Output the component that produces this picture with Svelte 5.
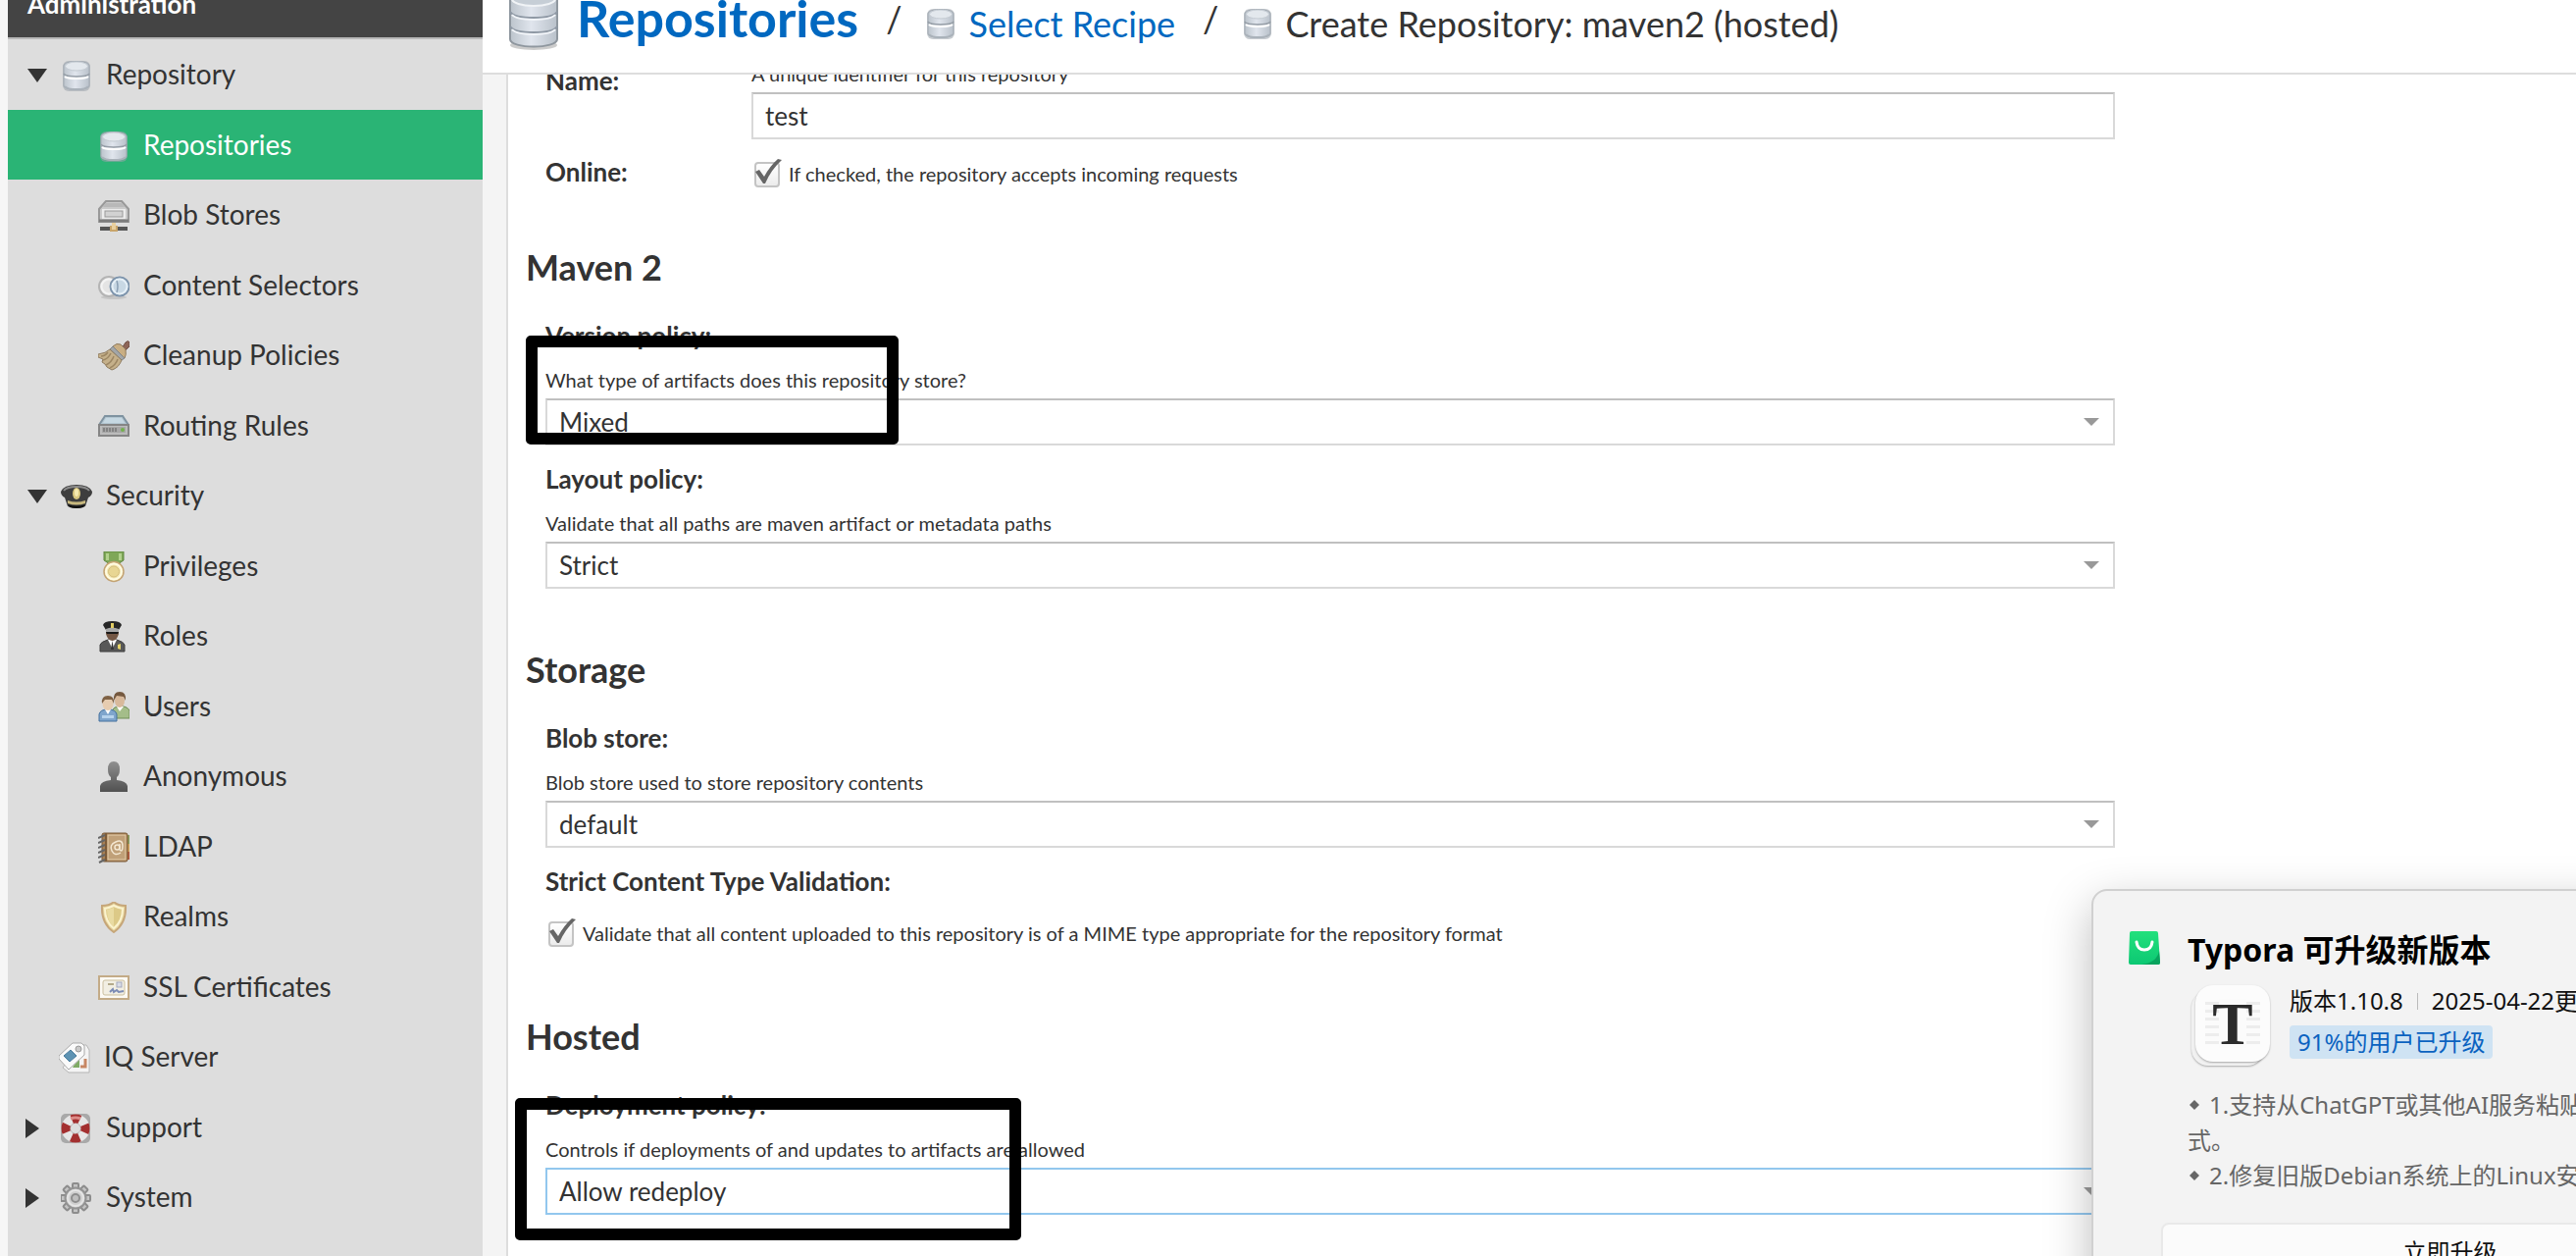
<script>
  const nav = [
    { label: 'Repository', icon: 'database', level: 1, arrow: 'open' },
    { label: 'Repositories', icon: 'database', level: 2, selected: true },
    { label: 'Blob Stores', icon: 'drive', level: 2 },
    { label: 'Content Selectors', icon: 'circles', level: 2 },
    { label: 'Cleanup Policies', icon: 'brush', level: 2 },
    { label: 'Routing Rules', icon: 'router', level: 2 },
    { label: 'Security', icon: 'cap', level: 1, arrow: 'open' },
    { label: 'Privileges', icon: 'medal', level: 2 },
    { label: 'Roles', icon: 'officer', level: 2 },
    { label: 'Users', icon: 'users', level: 2 },
    { label: 'Anonymous', icon: 'person', level: 2 },
    { label: 'LDAP', icon: 'book', level: 2 },
    { label: 'Realms', icon: 'shield', level: 2 },
    { label: 'SSL Certificates', icon: 'certificate', level: 2 },
    { label: 'IQ Server', icon: 'tags', level: 1 },
    { label: 'Support', icon: 'buoy', level: 1, arrow: 'closed' },
    { label: 'System', icon: 'gear', level: 1, arrow: 'closed' }
  ];
  const teeth = [0, 45, 90, 135, 180, 225, 270, 315];

  let name = $state('test');
  let online = $state(true);
  let strict = $state(true);
</script>

{#snippet icon(kind)}
  <svg class="icon" viewBox="0 0 32 32" aria-hidden="true">
    {#if kind === 'database'}
      <rect x="2" y="1" width="28" height="31" rx="6" fill="#9aa3ab" opacity="0.55" />
      <path d="M3 6C3 0 29 0 29 6V26C29 32 3 32 3 26Z" fill="url(#metal)" stroke="#a3abb3" />
      <ellipse cx="16" cy="6.500" rx="11.500" ry="4.500" fill="#e3e8ed" stroke="#c3cad1" />
      <path d="M3 14Q4 17 16 17T29 14" fill="none" stroke="#959da6" stroke-width="1.500" />
      <path d="M4 17Q6 19 16 19T28 17" fill="none" stroke="#fff" stroke-width="2" />
      <path d="M4 27Q6 30 16 30T28 27" fill="none" stroke="#aab2ba" stroke-width="2" />
    {:else if kind === 'drive'}
      <path d="M8 1H24L31 9V22H1V9Z" fill="#cacaca" stroke="#999" stroke-width="2" />
      <path d="M8 3H24L27 7H5Z" fill="#b8b8b8" />
      <rect x="4" y="9" width="24" height="10" fill="#ececec" />
      <rect x="7" y="11" width="18" height="6" fill="#d2d2d2" stroke="#999" />
      <path d="M1 21H31" stroke="#7c7c7c" stroke-width="3" />
      <rect x="2" y="27" width="28" height="4" fill="#555" />
      <rect x="12" y="26" width="8" height="6" fill="#c9a56a" />
      <rect x="14" y="23" width="4" height="7" fill="#e9cf9d" />
    {:else if kind === 'circles'}
      <ellipse cx="16" cy="27" rx="13" ry="2" fill="#000" opacity="0.1" />
      <circle cx="11" cy="16" r="10" fill="#e4e4e4" stroke="#b4b4b4" stroke-width="2" />
      <circle cx="11" cy="16" r="7.500" fill="none" stroke="#f4f4f4" stroke-width="2" />
      <circle cx="22" cy="16" r="9.500" fill="#c8d8e4" stroke="#7c93ab" stroke-width="2" />
      <circle cx="22" cy="16" r="7.500" fill="none" stroke="#e6f0f7" stroke-width="2" />
      <path d="M19 10Q21 16 19 22" fill="none" stroke="#8ba0b5" stroke-width="1.500" />
    {:else if kind === 'brush'}
      <path d="M24 8L28 2Q31 -1 32 2V6L27 11Z" fill="#8d6558" stroke="#6f4f45" />
      <path d="M15 6Q19 2 23 4L28 9Q29 15 27 18Z" fill="#c9ae83" stroke="#8f7c60" />
      <path d="M15 6L27 18L24 20L12 9Z" fill="#a2a6a8" stroke="#7e8386" />
      <path d="M12 9L24 20Q21 28 14 30L9 27L7 24L4 22L5 19L0 17V14Q8 13 12 9Z" fill="#c5b08a" stroke="#8f7c60" />
      <path d="M13 13Q10 19 5 20M16 16Q14 22 8 25M20 19Q18 25 12 28M10 12Q7 16 3 16" fill="none" stroke="#9c8663" stroke-width="1.500" />
    {:else if kind === 'router'}
      <path d="M7 5H25L31 14H1Z" fill="#b3c6d1" stroke="#7f93a0" stroke-width="2" />
      <path d="M8 7H24L27 12H5Z" fill="#cfe0ea" opacity="0.7" />
      <rect x="1" y="14" width="30" height="11" fill="#bcbcbc" stroke="#858585" stroke-width="2" />
      <rect x="4" y="16" width="24" height="6" fill="#a7a7a7" />
      <path d="M6 17V21M9 17V21M12 17V21M15 17V21M18 17V21" stroke="#777" stroke-width="1.500" />
      <circle cx="25" cy="19" r="2" fill="#72b04c" />
    {:else if kind === 'cap'}
      <path d="M0 11Q3 4 16 4T32 11Q32 15 28 17L25 26Q16 30 7 26L4 17Q0 15 0 11Z" fill="#3e3e3e" />
      <path d="M3 10Q6 6 16 6T29 10" fill="none" stroke="#8b8b8b" stroke-width="2" />
      <path d="M7 20Q16 23 25 20L25 23Q16 26 7 23Z" fill="#c7b87e" />
      <path d="M7 24Q16 27 25 24L23 27Q16 29 9 27Z" fill="#111" />
      <ellipse cx="16" cy="13" rx="4" ry="6" fill="#d9c77f" />
      <ellipse cx="16" cy="12" rx="2" ry="4" fill="#f4e9b0" />
    {:else if kind === 'medal'}
      <path d="M6 0H26V9L20 13H12L6 9Z" fill="#7fa758" stroke="#5f873f" />
      <path d="M8 2H11V9H8ZM21 2H24V9H21Z" fill="#b2d18d" />
      <circle cx="16" cy="20.500" r="10" fill="#f3e7b4" stroke="#c3a374" stroke-width="1.500" />
      <circle cx="16" cy="20.500" r="8" fill="none" stroke="#fffbe2" stroke-width="2" />
      <circle cx="16" cy="20.500" r="5.500" fill="#e8d693" stroke="#d5bf7d" />
    {:else if kind === 'officer'}
      <path d="M2 31V24Q3 21 10 19H19Q26 21 27 24V31Z" fill="#585858" stroke="#3c3c3c" />
      <path d="M10 19L14.500 28L19 19Z" fill="#fff" />
      <path d="M14.500 20L16 29H13Z" fill="#333" />
      <path d="M8 8H21V13Q19 20 14.500 20Q10 20 8 13Z" fill="#735745" />
      <path d="M5 4Q6 0 14.500 0Q23 0 24 4L21 9H8Z" fill="#262626" />
      <path d="M8 8Q14 5 21 8V11H8Z" fill="#a8a8a8" />
      <path d="M8 11H21L20 13H9Z" fill="#191919" />
      <rect x="13" y="2" width="3" height="5" fill="#e0cb63" />
      <path d="M20 24L23 23V29L20 28Z" fill="#e6d369" />
    {:else if kind === 'users'}
      <path d="M14 25V19Q16 15 22 15Q29 14 32 19V27H16Z" fill="#a4bd89" stroke="#6f8d55" />
      <path d="M19 15L22 20L26 15Z" fill="#fff" />
      <ellipse cx="22" cy="9" rx="5" ry="7" fill="#d8b99b" />
      <path d="M16 9Q15 0 22 0Q29 0 28 9L26 5L19 4Z" fill="#75593f" />
      <path d="M1 30V23Q2 18 10 18Q18 18 19 23V30Z" fill="#7fa5cc" stroke="#44719e" />
      <path d="M4 24H16V27H4Z" fill="#b6d2ec" />
      <path d="M7 18L10 23L13 18Z" fill="#fff" />
      <ellipse cx="10" cy="12" rx="5.500" ry="7" fill="#e6ccb0" />
      <path d="M4 12Q3 4 10 4Q17 4 16 12L14 8L7 8Z" fill="#7f6245" />
    {:else if kind === 'person'}
      <path d="M10 8Q10 0 16 0T22 8Q22 14 19 16V19Q29 20 30 25V31H2V25Q3 20 13 19V16Q10 14 10 8Z" fill="url(#shadowy)" />
    {:else if kind === 'book'}
      <path d="M28 3H32V12H28Z" fill="#8ba05f" />
      <path d="M28 12H32V20H28Z" fill="#d4a55c" />
      <path d="M28 20H32V28H28Z" fill="#b65a3e" />
      <rect x="4" y="1" width="26" height="29" rx="2" fill="#a78055" stroke="#7d5c3a" />
      <rect x="10" y="3" width="18" height="25" fill="#c0a078" stroke="#e5cfad" />
      <path d="M8 1V30" stroke="#7d5c3a" stroke-width="2" />
      <path d="M0 6L7 3M0 11L7 8M0 16L7 13M0 21L7 18M0 26L7 23M1 31L7 28" stroke="#666" stroke-width="2" />
      <path d="M23 21Q17 25 14 19T18 10T25 14T22 18V12" fill="none" stroke="#f3e7d2" stroke-width="1.500" />
      <circle cx="19.500" cy="15.500" r="2.500" fill="none" stroke="#f3e7d2" stroke-width="1.500" />
    {:else if kind === 'shield'}
      <path d="M16 0Q20 4 28 4Q29 22 16 31Q3 22 4 4Q12 4 16 0Z" fill="#e9d9a2" stroke="#c6a679" stroke-width="2" />
      <path d="M16 4Q20 6 25 7Q25 20 16 27Q7 20 7 7Q12 6 16 4Z" fill="#dcc987" stroke="#fbf3cf" stroke-width="2" />
      <path d="M16 6V26Q9 20 9 8Z" fill="#e9dba2" />
    {:else if kind === 'certificate'}
      <rect x="1" y="4" width="30" height="23" fill="#fcfaf4" stroke="#c3ab87" stroke-width="2" />
      <rect x="5" y="8" width="22" height="15" rx="2" fill="#f2efe3" stroke="#cbbf9f" />
      <path d="M10 12H16" stroke="#b3a98a" stroke-width="2" />
      <rect x="19" y="10" width="5" height="5" fill="#d9dce6" stroke="#a3a9bd" />
      <path d="M12 20L15 17L16 20L19 18L21 20L26 19" fill="none" stroke="#7c8cb5" stroke-width="2" />
    {:else if kind === 'tags'}
      <path d="M20 3H28L31 8V31H10L4 26Z" fill="#f4f4f4" stroke="#b5b5b5" />
      <path d="M27 17V25H22" fill="none" stroke="#c78764" stroke-width="3" />
      <path d="M15 24L21 17V26H14Z" fill="#80ab66" />
      <path d="M14 1H23L26 4V13L10 28L0 17V14Z" fill="#fafafa" stroke="#aaa" />
      <path d="M12 8L18 14L11 20L5 14Z" fill="#5e93b3" stroke="#4a7c9c" />
      <circle cx="20" cy="7" r="3" fill="#c9c9c9" stroke="#999" />
    {:else if kind === 'buoy'}
      <rect x="0" y="1" width="30" height="30" rx="5" fill="#a9a9a9" />
      <circle cx="15" cy="16" r="10" fill="none" stroke="#e6e6e6" stroke-width="9" />
      <circle cx="15" cy="16" r="10" fill="none" stroke="#a33030" stroke-width="9" stroke-dasharray="8.400 7.308" stroke-dashoffset="4.200" />
      <circle cx="15" cy="16" r="5" fill="#ddd" />
      <path d="M10 6Q15 4 20 6" fill="none" stroke="#dc8b88" stroke-width="3" />
    {:else if kind === 'gear'}
      {#each teeth as angle}
        <rect x="12" y="1" width="6" height="9" rx="1" fill="#c4c4c4" stroke="#8d8d8d" stroke-width="2" transform="rotate({angle} 15 16)" />
      {/each}
      <circle cx="15" cy="16" r="10.500" fill="#cfcfcf" stroke="#939393" stroke-width="2" />
      <circle cx="15" cy="16" r="8" fill="none" stroke="#e5e5e5" stroke-width="2" />
      <circle cx="15" cy="16" r="4" fill="#bfbfbf" stroke="#8e8e8e" stroke-width="2" />
    {/if}
  </svg>
{/snippet}

{#snippet combo(id, value, focused)}
  <div class="combo">
    <select {id} class:focused>
      <option>{value}</option>
    </select>
    <svg class="trigger" viewBox="0 0 18 10" aria-hidden="true"><path d="M1 1H17L9 9Z" fill="#999" /></svg>
  </div>
{/snippet}

{#snippet tick()}
  <svg class="tick" viewBox="0 0 32 32" aria-hidden="true">
    <path d="M4 14L8 12L13 19Q19 8 27 1L31 2Q20 12 14 26H12Z" fill="#666" />
  </svg>
{/snippet}

<svg class="defs" aria-hidden="true">
  <defs>
    <linearGradient id="metal">
      <stop offset="0" stop-color="#bcc4cc" />
      <stop offset="0.450" stop-color="#e0e5ed" />
      <stop offset="1" stop-color="#b9c1ca" />
    </linearGradient>
    <linearGradient id="shadowy" x2="0" y2="1">
      <stop offset="0" stop-color="#8f8f8f" />
      <stop offset="1" stop-color="#515151" />
    </linearGradient>
    <linearGradient id="bag" x2="0" y2="1">
      <stop offset="0" stop-color="#23e07c" />
      <stop offset="1" stop-color="#0cc873" />
    </linearGradient>
  </defs>
</svg>

<div class="page">
  <aside class="sidebar">
    <h2 class="menu-title">Administration</h2>
    <nav>
      <ul>
        {#each nav as item}
          <li>
            <a href="#{item.label}" class="level{item.level}" class:selected={item.selected} class:leaf={!item.arrow}>
              {#if item.arrow === 'open'}
                <svg class="arrow" viewBox="0 0 22 20" aria-hidden="true"><path d="M2 3H22L12 17Z" fill="#333" /></svg>
              {:else if item.arrow === 'closed'}
                <svg class="arrow" viewBox="0 0 22 20" aria-hidden="true"><path d="M0 0V20L14 10Z" fill="#333" /></svg>
              {/if}
              {@render icon(item.icon)}
              <span>{item.label}</span>
            </a>
          </li>
        {/each}
      </ul>
    </nav>
  </aside>

  <main>
    <header>
      <svg class="feature" viewBox="0 0 64 64" aria-hidden="true">
        <ellipse cx="32" cy="58" rx="24" ry="5" fill="#000" opacity="0.200" />
        <path d="M8 10C8 0 56 0 56 10V52C56 62 8 62 8 52Z" fill="url(#metal)" stroke="#8f979f" stroke-width="2" />
        <ellipse cx="32" cy="11" rx="22" ry="7" fill="#c6ced6" stroke="#f0f3f6" stroke-width="2" />
        <path d="M8 24Q12 30 32 30T56 24M8 39Q12 45 32 45T56 39" fill="none" stroke="#8e98a4" stroke-width="2" />
        <path d="M10 27Q14 32 32 32T54 27M10 42Q14 47 32 47T54 42" fill="none" stroke="#f2f5f9" stroke-width="2" />
      </svg>
      <a class="root" href="#repositories">Repositories</a>
      <span class="slash">/</span>
      <a class="crumb" href="#recipe">{@render icon('database')}<span>Select Recipe</span></a>
      <span class="slash">/</span>
      <span class="crumb">{@render icon('database')}<span>Create Repository: maven2 (hosted)</span></span>
    </header>

    <div class="body">
      <form>
        <div class="row first">
          <label class="name" for="name">Name:</label>
          <div class="field">
            <p class="hint">A unique identifier for this repository</p>
            <input id="name" type="text" bind:value={name} />
          </div>
        </div>
        <div class="row second">
          <span class="name">Online:</span>
          <label class="check">
            <span class="box"><input type="checkbox" bind:checked={online} />{#if online}{@render tick()}{/if}</span>
            If checked, the repository accepts incoming requests
          </label>
        </div>

        <section>
          <h3>Maven 2</h3>
          <div class="field">
            <label class="name" for="version">Version policy:</label>
            <p class="hint">What type of artifacts does this repository store?</p>
            {@render combo('version', 'Mixed', false)}
          </div>
          <div class="field">
            <label class="name" for="layout">Layout policy:</label>
            <p class="hint">Validate that all paths are maven artifact or metadata paths</p>
            {@render combo('layout', 'Strict', false)}
          </div>
        </section>

        <section>
          <h3>Storage</h3>
          <div class="field">
            <label class="name" for="blob">Blob store:</label>
            <p class="hint">Blob store used to store repository contents</p>
            {@render combo('blob', 'default', false)}
          </div>
          <div class="field strict">
            <span class="name">Strict Content Type Validation:</span>
            <label class="check">
              <span class="box"><input type="checkbox" bind:checked={strict} />{#if strict}{@render tick()}{/if}</span>
              Validate that all content uploaded to this repository is of a MIME type appropriate for the repository format
            </label>
          </div>
        </section>

        <section>
          <h3>Hosted</h3>
          <div class="field">
            <label class="name" for="deployment">Deployment policy:</label>
            <p class="hint">Controls if deployments of and updates to artifacts are allowed</p>
            {@render combo('deployment', 'Allow redeploy', true)}
          </div>
        </section>
      </form>
    </div>
  </main>

  <div class="mark version" aria-hidden="true"></div>
  <div class="mark deployment" aria-hidden="true"></div>

  <div class="toast" role="dialog" aria-label="Typora">
    <svg class="store" viewBox="0 0 34 34" aria-hidden="true">
      <path d="M4 0H29Q31 0 31 2L33 32Q33 34 31 34H3Q1 34 1 32L2 2Q2 0 4 0Z" fill="url(#bag)" />
      <path d="M14 34Q30 32 32 20L33 32Q33 34 31 34Z" fill="#08a35d" />
      <path d="M9 11Q10 19 17 19T25 11" fill="none" stroke="#fff" stroke-width="3" stroke-linecap="round" />
    </svg>
    <div class="content">
      <h4>Typora 可升级新版本</h4>
      <div class="app">
        <div class="logo" aria-hidden="true">T</div>
        <div class="meta">
          <p><span>版本1.10.8</span><i></i><span>2025-04-22更新</span></p>
          <strong>91%的用户已升级</strong>
        </div>
      </div>
      <div class="notes">
        <p><svg viewBox="0 0 10 10" aria-hidden="true"><path d="M5 0L10 5L5 10L0 5Z" fill="#666" /></svg>1.支持从ChatGPT或其他AI服务粘贴数学公式的格式。</p>
        <p><svg viewBox="0 0 10 10" aria-hidden="true"><path d="M5 0L10 5L5 10L0 5Z" fill="#666" /></svg>2.修复旧版Debian系统上的Linux安装问题</p>
      </div>
    </div>
    <button type="button">立即升级</button>
  </div>
</div>

<style>
  :global(body) {
    overflow: hidden;
  }
  * {
    box-sizing: border-box;
  }
  h2, h3, h4, p, ul {
    margin: 0;
    padding: 0;
  }
  .defs {
    position: absolute;
    width: 0;
    height: 0;
  }
  .page {
    position: relative;
    display: flex;
    height: 100vh;
    overflow: hidden;
    background: #f4f4f4;
    color: #333;
    font-family: Lato, 'Noto Sans', sans-serif;
  }
  .icon {
    flex: none;
    width: 32px;
    height: 32px;
  }

  .sidebar {
    flex: none;
    width: 492px;
    padding-left: 8px;
    background: linear-gradient(90deg, #f6f6f6 8px, #ddd 8px);
  }
  .menu-title {
    height: 40px;
    border-bottom: 2px solid #b9b9b9;
    background: #444;
    color: #fff;
    padding-left: 20px;
    font-size: 26px;
    line-height: 8px;
  }
  ul {
    list-style: none;
  }
  li {
    height: 71px;
  }
  li:nth-child(odd) {
    height: 72px;
  }
  li a {
    display: flex;
    align-items: center;
    height: 100%;
    padding: 2px 0 0 18px;
    color: #333;
    font-size: 28px;
    line-height: 34px;
    text-decoration: none;
  }
  li a.leaf {
    padding-left: 52px;
  }
  li a.level2 {
    padding-left: 92px;
  }
  li span {
    padding: 0 0 4px 14px;
  }
  li a.selected {
    background: #2ab475;
    color: #fff;
  }
  .arrow {
    width: 22px;
    height: 20px;
    margin-right: 14px;
  }

  main {
    flex: 1;
    min-width: 0;
    display: flex;
    flex-direction: column;
  }
  header {
    display: flex;
    align-items: center;
    height: 76px;
    padding: 0 0 34px 20px;
    border-bottom: 2px solid #ddd;
    background: #fff;
    font-size: 36px;
    line-height: 44px;
    white-space: nowrap;
  }
  header a {
    color: #0068c0;
    text-decoration: none;
  }
  .feature {
    flex: none;
    width: 64px;
    height: 64px;
  }
  .root {
    padding: 0 0 4px 12px;
    font-size: 52px;
    font-weight: 700;
  }
  .slash {
    padding: 0 24px 2px 28px;
  }
  .crumb {
    display: flex;
    align-items: center;
    gap: 12px;
    padding-top: 4px;
  }
  .crumb .icon {
    height: 36px;
    padding-top: 4px;
  }
  .crumb span {
    padding-top: 3px;
  }

  .body {
    flex: 1;
    min-height: 0;
    margin-left: 24px;
    padding: 0 18px;
    border-left: 2px solid #ddd;
    background: #fff;
    overflow: hidden;
  }
  form {
    max-width: 1620px;
    margin-top: -13px;
  }
  .row {
    display: grid;
    grid-template-columns: 210px 1fr;
    margin-left: 20px;
  }
  .row.second {
    height: 32px;
    margin-top: 16px;
  }
  .row.first .name {
    padding-top: 2px;
  }
  .row .field {
    margin: 0;
  }
  section {
    margin-top: 60px;
  }
  h3 {
    margin-bottom: 31px;
    font-size: 36px;
    line-height: 44px;
  }
  .field {
    margin: 0 0 17px 20px;
  }
  .field:last-child {
    margin-bottom: 0;
  }
  .name {
    display: block;
    font-size: 26px;
    font-weight: 700;
    line-height: 34px;
  }
  .field .name {
    margin-bottom: 16px;
  }
  .hint {
    margin-bottom: 7px;
    font-size: 20px;
    line-height: 24px;
  }
  input[type='text'],
  select {
    display: block;
    width: 100%;
    height: 48px;
    padding: 0 12px 1px;
    border: 2px solid #d9d9d9;
    border-top-color: #c0c0c0;
    border-radius: 0;
    outline: 0;
    background: #fff;
    color: #333;
    font: 26px/32px Lato, sans-serif;
    appearance: none;
  }
  select.focused {
    border-color: #92c7ee;
  }
  .combo {
    display: grid;
    align-items: center;
  }
  .combo > * {
    grid-area: 1 / 1;
  }
  .trigger {
    justify-self: end;
    width: 18px;
    height: 10px;
    margin-right: 15px;
    pointer-events: none;
  }
  .check {
    display: flex;
    align-items: center;
    gap: 6px;
    padding-top: 6px;
    height: 32px;
    font-size: 20px;
    line-height: 24px;
  }
  .box {
    display: grid;
    width: 32px;
    height: 32px;
  }
  .box > * {
    grid-area: 1 / 1;
  }
  .box input {
    width: 26px;
    height: 26px;
    margin: 4px 0 0 3px;
    border: 2px solid #c4c4c4;
    border-radius: 4px;
    background: linear-gradient(#fff, #ececec);
    appearance: none;
  }
  .tick {
    width: 32px;
    height: 32px;
    pointer-events: none;
  }
  .strict .name {
    margin-bottom: 19px;
  }
  .strict .check {
    height: 40px;
    padding: 0 0 6px;
  }
  .strict {
    height: 93px;
  }

  .mark {
    position: absolute;
    border: 12px solid #000;
    border-radius: 5px;
    pointer-events: none;
  }
  .mark.version {
    left: 536px;
    top: 342px;
    width: 380px;
    height: 111px;
  }
  .mark.deployment {
    left: 525px;
    top: 1119px;
    width: 516px;
    height: 145px;
  }

  .toast {
    position: absolute;
    top: 906px;
    right: -234px;
    width: 728px;
    padding: 36px 70px 32px 35px;
    display: grid;
    grid-template-columns: 34px 1fr;
    column-gap: 27px;
    border: 2px solid #d0d0d0;
    border-radius: 16px;
    background: #f3f3f3;
    box-shadow: 0 16px 48px rgb(0 0 0 / 26%);
    color: #111;
    font-family: 'Noto Sans', 'Noto Sans CJK SC', sans-serif;
    font-size: 24px;
    line-height: 36px;
  }
  .store {
    width: 34px;
    height: 34px;
    margin-top: 5px;
  }
  h4 {
    color: #000;
    font-size: 32px;
    line-height: 48px;
  }
  .app {
    display: flex;
    gap: 20px;
    margin-top: 12px;
  }
  .logo {
    display: grid;
    place-items: center;
    width: 76px;
    height: 78px;
    margin-left: 8px;
    border-radius: 18px;
    background:
      linear-gradient(#fbfbfb, #fbfbfb) center / 28px 50px no-repeat,
      repeating-linear-gradient(#ededed 0 3px, #fbfbfb 3px 8px) center / 56px 44px no-repeat,
      #fcfcfc;
    box-shadow: 0 1px 2px rgb(0 0 0 / 30%), -5px 5px 0 -1px #f1f1f1, -5px 6px 2px -1px rgb(0 0 0 / 30%);
    color: #2b2b2b;
    font: 700 62px/76px 'Liberation Serif', serif;
  }
  .meta p {
    display: flex;
    align-items: center;
    margin-bottom: 8px;
    line-height: 32px;
    white-space: nowrap;
  }
  .meta i {
    width: 1px;
    height: 17px;
    margin: 0 14px;
    background: #bbb;
  }
  .meta strong {
    display: inline-block;
    padding: 0 8px;
    border-radius: 4px;
    background: #cfe3f3;
    color: #0a62c0;
    font-weight: 400;
    line-height: 34px;
  }
  .notes {
    margin-top: 26px;
    color: #666;
  }
  .notes p {
    line-height: 36px;
  }
  .notes svg {
    width: 10px;
    height: 10px;
    margin: 0 10px 4px 2px;
  }
  .toast button {
    grid-column: 1 / -1;
    height: 60px;
    margin: 30px -4px 0 34px;
    border: 2px solid #e9e9e9;
    border-radius: 8px;
    background: #fbfbfb;
    color: #111;
    font: inherit;
  }
</style>
